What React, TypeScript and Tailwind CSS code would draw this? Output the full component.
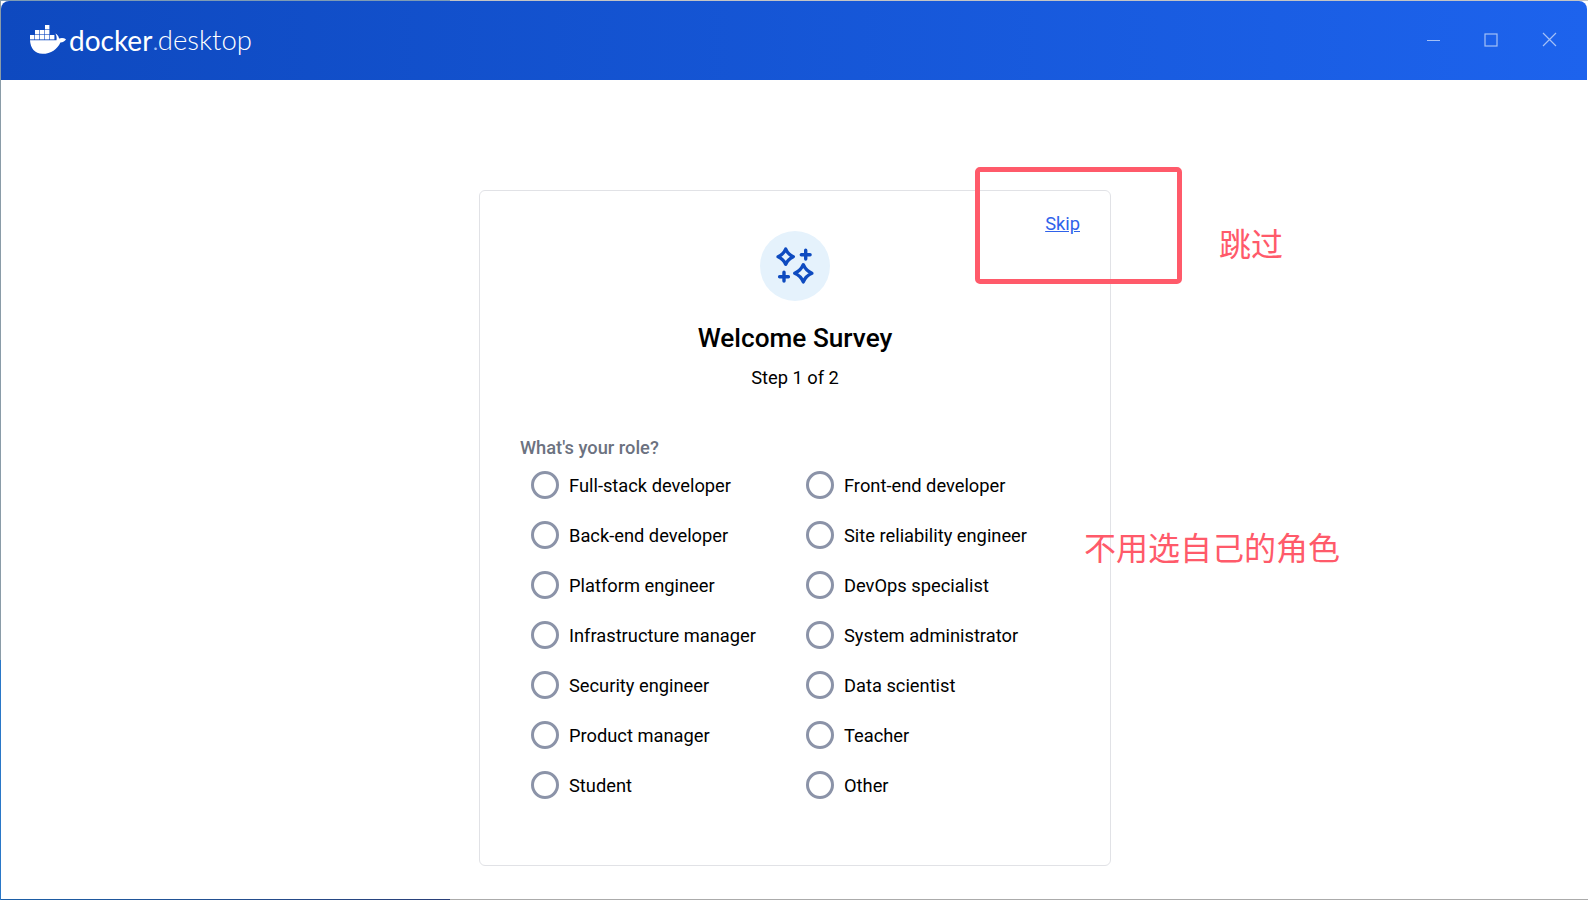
const ROLES = [
  ["Full-stack developer", "Front-end developer"],
  ["Back-end developer", "Site reliability engineer"],
  ["Platform engineer", "DevOps specialist"],
  ["Infrastructure manager", "System administrator"],
  ["Security engineer", "Data scientist"],
  ["Product manager", "Teacher"],
  ["Student", "Other"],
].flat();

function Whale() {
  const boxes = [
    [15, 0], [5, 5], [10, 5], [15, 5], [0, 10], [5, 10], [10, 10], [15, 10], [20, 10],
  ];
  return (
    <svg width="36" height="29" viewBox="0 0 36 29" className="shrink-0" aria-hidden="true">
      {boxes.map(([x, y]) => (
        <rect key={`${x}-${y}`} x={x} y={y} width="4.4" height="4.4" fill="#fff" />
      ))}
      <path
        d="M0 15.2h26.5c.5-2.6-.1-5-1.2-6.6 1.9.8 3.4 2.6 3.8 4.9 2.2-.8 4.9-.7 6.9.7-.9 2-3 3.1-5.6 3.2C27.4 24 21 28.8 12.5 28.8 4.8 28.8.4 23 0 15.2z"
        fill="#fff"
      />
    </svg>
  );
}

function Sparkle({ x, y, r }: { x: number; y: number; r: number }) {
  const k = r * 0.3;
  return (
    <path
      d={`M${x} ${y - r}Q${x + k} ${y - k} ${x + r} ${y}Q${x + k} ${y + k} ${x} ${y + r}Q${x - k} ${y + k} ${x - r} ${y}Q${x - k} ${y - k} ${x} ${y - r}Z`}
    />
  );
}

function Plus({ x, y, r }: { x: number; y: number; r: number }) {
  return <path d={`M${x - r} ${y}H${x + r}M${x} ${y - r}V${y + r}`} />;
}

function SurveyIcon() {
  return (
    <div className="h-[70px] w-[70px] rounded-full bg-[#e5f2fc]">
      <svg width="70" height="70" viewBox="0 0 70 70" fill="none" stroke="#0e4bc0" strokeWidth="3.4" strokeLinejoin="round" strokeLinecap="round" aria-hidden="true">
        <Sparkle x={25.7} y={25.7} r={7.6} />
        <Sparkle x={43.3} y={42.3} r={8.6} />
        <Plus x={45.7} y={23.7} r={4.4} />
        <Plus x={24} y={45.7} r={4.4} />
      </svg>
    </div>
  );
}

export default function App() {
  return (
    <div className="relative h-[900px] w-[1588px] overflow-hidden bg-[linear-gradient(to_bottom,#8a9ca8_0,#8a9ca8_660px,#2a78c8_660px),linear-gradient(to_right,#7f9cb4_0,#7f9cb4_450px,#c4c4c4_450px),linear-gradient(to_right,#1c5fa8_0,#2a3f78_450px,#ababab_450px)] bg-[length:1px_100%,100%_1px,100%_1px] bg-[position:left_top,left_top,left_bottom] bg-no-repeat p-px font-['Roboto',sans-serif] text-[18.3px] text-black">
      <div className="flex h-full flex-col overflow-hidden rounded-[8px] bg-white">
        <header className="flex h-[79px] shrink-0 items-center bg-[linear-gradient(to_right,#0e49bf,#1d63ed)] pb-[2px] pl-[29px] text-white">
          <div className="flex items-center">
            <Whale />
            <span className="ml-[3px] font-['Lato',sans-serif] text-[28px] leading-none">docker</span>
            <span className="font-['Lato',sans-serif] text-[27.5px] font-light leading-none">
              <span className="mr-[-1px] text-[#9dbcf5]">.</span>desktop
            </span>
          </div>
          <div className="ml-auto flex items-center pr-[30px] text-white/60">
            <svg width="14" height="14" viewBox="0 0 14 14" aria-hidden="true">
              <path d="M0 7.5H13" stroke="currentColor" strokeWidth="1.2" />
            </svg>
            <svg width="14" height="14" viewBox="0 0 14 14" className="ml-[43px]" aria-hidden="true">
              <rect x="1" y="1" width="12" height="12" fill="none" stroke="currentColor" strokeWidth="1.2" />
            </svg>
            <svg width="15" height="15" viewBox="0 0 15 15" className="ml-[44px]" aria-hidden="true">
              <path d="M1 1L14 14M14 1L1 14" stroke="currentColor" strokeWidth="1.2" />
            </svg>
          </div>
        </header>

        <main className="flex flex-1 justify-center pl-[2px] pt-[110px]">
          <section className="h-[676px] w-[632px] rounded-[6px] border border-[#e1e2e6] px-[40px] pt-[40px]">
            <div className="grid grid-cols-[1fr_70px_1fr]">
              <div />
              <SurveyIcon />
              <div className="-mt-[21px] flex items-start justify-end">
                <a href="#skip" className="mr-[-10px] leading-[27px] text-[#2f62ea] underline">Skip</a>
              </div>
            </div>
            <h1 className="mt-[22px] text-center text-[26.2px] font-medium leading-[30px]">Welcome Survey</h1>
            <p className="mt-[11px] text-center leading-[27px]">Step 1 of 2</p>
            <p className="mt-[43px] font-medium leading-[27px] text-[#6c7280]">What's your role?</p>
            <div className="-mt-px ml-[11px] grid grid-cols-[275px_1fr]">
              {ROLES.map((role) => (
                <label key={role} className="flex h-[50px] items-center gap-[10px]">
                  <span className="h-[28px] w-[28px] rounded-full border-[3px] border-[#8b93a8]" />
                  <span className="mt-[2px]">{role}</span>
                </label>
              ))}
            </div>
          </section>
        </main>
      </div>

      <div className="absolute left-[975px] top-[167px] h-[117px] w-[207px] rounded-[5px] border-[5px] border-[#ff5a6a]" />
      <span className="absolute left-[1219px] top-[219px] font-['Noto_Sans_CJK_SC',sans-serif] text-[32px] leading-[46px] text-[#ff5a6a]">跳过</span>
      <span className="absolute left-[1084px] top-[523px] font-['Noto_Sans_CJK_SC',sans-serif] text-[32px] leading-[46px] text-[#ff5a6a]">不用选自己的角色</span>
    </div>
  );
}
